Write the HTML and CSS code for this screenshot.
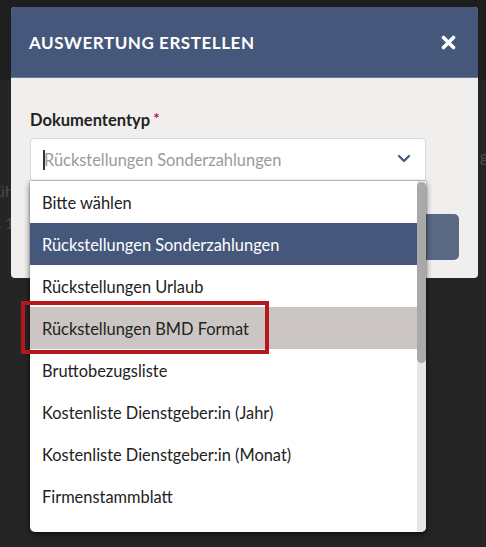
FILE: index.html
```html
<!DOCTYPE html>
<html lang="de">
<head>
<meta charset="utf-8">
<title>Auswertung erstellen</title>
<link rel="stylesheet" href="styles.css">
</head>
<body>
<div class="page">
  <span class="bg-text bg-a">üh</span>
  <span class="bg-text bg-b">s 1</span>
  <span class="bg-text bg-c">g</span>

  <div class="modal">
    <div class="modal-header">
      <h2 class="modal-title">AUSWERTUNG ERSTELLEN</h2>
      <button class="close" aria-label="Schließen">
        <svg width="15" height="15" viewBox="0 0 15 15"><path d="M2.5 2.5 L12.5 12.5 M12.5 2.5 L2.5 12.5" stroke="#fff" stroke-width="3.6" stroke-linecap="round"/></svg>
      </button>
    </div>
    <div class="modal-body">
      <label class="field-label">Dokumententyp<span class="req">*</span></label>
      <div class="select-wrap">
        <div class="select">
          <span class="caret"></span>
          <span class="placeholder">Rückstellungen Sonderzahlungen</span>
          <svg class="chevron" width="14" height="9" viewBox="0 0 14 9"><path d="M2 2 L7 7 L12 2" fill="none" stroke="#45577a" stroke-width="2.2" stroke-linecap="round" stroke-linejoin="round"/></svg>
        </div>
        <div class="menu">
          <ul class="options">
            <li class="option">Bitte wählen</li>
            <li class="option selected">Rückstellungen Sonderzahlungen</li>
            <li class="option">Rückstellungen Urlaub</li>
            <li class="option hover">Rückstellungen BMD Format</li>
            <li class="option">Bruttobezugsliste</li>
            <li class="option">Kostenliste Dienstgeber:in (Jahr)</li>
            <li class="option">Kostenliste Dienstgeber:in (Monat)</li>
            <li class="option">Firmenstammblatt</li>
          </ul>
          <div class="scrollbar"><div class="thumb"></div></div>
        </div>
      </div>
      <div class="actions">
        <button class="primary"></button>
      </div>
    </div>
  </div>

  <div class="highlight-box"></div>
</div>
</body>
</html>
```

FILE: styles.css
```css
* { box-sizing: border-box; }

html, body {
  margin: 0;
  padding: 0;
}

body {
  background: #222222;
  font-family: Lato, "Open Sans", sans-serif;
  width: 486px;
  height: 547px;
  overflow: hidden;
}

.page {
  position: relative;
  width: 486px;
  height: 547px;
  background: linear-gradient(#1e1e1e 0, #1e1e1e 80px, #252525 80px);
}

.bg-text {
  position: absolute;
  color: #4a4a4a;
  font-size: 16px;
}
.bg-a { left: -4px; top: 181px; }
.bg-b { left: -6px; top: 213px; }
.bg-c { left: 480px; top: 146px; }

.modal {
  position: absolute;
  left: 11px;
  top: 7px;
  width: 467px;
  height: 271px;
  background: #f0efed;
  border-radius: 4px;
  display: flex;
  flex-direction: column;
}

.modal-header {
  height: 71px;
  background: #45577a;
  border-radius: 4px 4px 0 0;
  border-bottom: 1px solid #6d7c99;
  display: flex;
  align-items: center;
  justify-content: space-between;
  padding: 0 22px 0 18px;
}

.modal-title {
  margin: 0;
  color: #ffffff;
  font-size: 17px;
  font-weight: 700;
  letter-spacing: 0.55px;
}

.close {
  border: 0;
  background: none;
  padding: 0;
  width: 15px;
  height: 15px;
  display: flex;
}

.modal-body {
  position: relative;
  flex: 1;
  padding: 30px 19px 0 19px;
  display: flex;
  flex-direction: column;
}

.field-label {
  display: block;
  font-size: 16.5px;
  font-weight: 700;
  color: #222222;
  line-height: 20px;
  height: 21px;
}

.req {
  color: #c4123f;
  margin-left: 3px;
  font-size: 15px;
  vertical-align: 2px;
}

.select-wrap {
  position: relative;
  margin-top: 9px;
  width: 396px;
  z-index: 2;
}

.select {
  height: 43px;
  background: #ffffff;
  border: 1px solid #d9d9d9;
  border-radius: 4px 4px 0 0;
  display: flex;
  align-items: center;
  padding: 0 14px 0 12px;
}

.caret {
  width: 2px;
  height: 20px;
  background: #333;
  margin-right: -1px;
}

.placeholder {
  flex: 1;
  color: #9a9a9a;
  font-size: 16.4px;
}

.chevron {
  display: block;
  margin-top: -2px;
}

.menu {
  position: absolute;
  left: 0;
  top: 43px;
  width: 396px;
  height: 351px;
  background: #ffffff;
  border-radius: 0 0 5px 5px;
  box-shadow: 0 3px 6px rgba(0, 0, 0, 0.55), 0 0 2px rgba(0, 0, 0, 0.4);
  display: flex;
  overflow: hidden;
}

.options {
  list-style: none;
  margin: 0;
  padding: 0;
  flex: 1;
}

.option {
  height: 42px;
  display: flex;
  align-items: center;
  padding-left: 12px;
  font-size: 16.4px;
  color: #222222;
}

.option.selected {
  background: #45577a;
  color: #ffffff;
}

.option.hover {
  background: #cbc6c3;
}

.scrollbar {
  width: 9px;
  background: #e6e6e6;
  display: flex;
  flex-direction: column;
  padding-top: 1px;
}

.thumb {
  height: 181px;
  background: #a9a9a9;
  border-radius: 5px;
}

.actions {
  display: flex;
  justify-content: flex-end;
  margin-top: 33px;
}

.primary {
  width: 79px;
  height: 46px;
  border: 0;
  border-radius: 5px;
  background: #5b6985;
}

.highlight-box {
  position: absolute;
  left: 21px;
  top: 301px;
  width: 248px;
  height: 53px;
  border: 4px solid #b5171c;
  z-index: 5;
}
```
